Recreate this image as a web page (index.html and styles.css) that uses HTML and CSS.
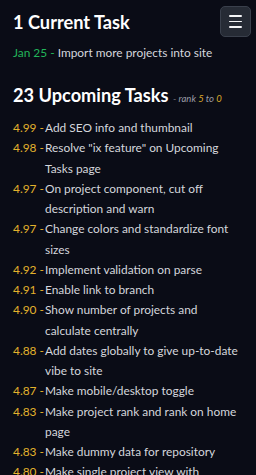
FILE: index.html
```html
<!doctype html>
<html>
	<head>
		<title>Tasks</title>
		<meta charset="utf-8" />
		<link rel="stylesheet" href="styles.css">
	</head>
	<body>
		<div class="page">
			<div class="top">
				<h2>1 Current Task</h2>
				<button class="menu" type="button">
					<span></span><span></span><span></span>
				</button>
			</div>
			<p class="current"><span class="date">Jan 25 -</span> Import more projects into site</p>

			<h2 class="upcoming">23 Upcoming Tasks <small>- rank <b>5</b> to <b>0</b></small></h2>
			<ul class="tasks">
				<li><span class="rank">4.99 -</span><span>Add SEO info and thumbnail</span></li>
				<li><span class="rank">4.98 -</span><span>Resolve "ix feature" on Upcoming Tasks page</span></li>
				<li><span class="rank">4.97 -</span><span>On project component, cut off description and warn</span></li>
				<li><span class="rank">4.97 -</span><span>Change colors and standardize font sizes</span></li>
				<li><span class="rank">4.92 -</span><span>Implement validation on parse</span></li>
				<li><span class="rank">4.91 -</span><span>Enable link to branch</span></li>
				<li><span class="rank">4.90 -</span><span>Show number of projects and calculate centrally</span></li>
				<li><span class="rank">4.88 -</span><span>Add dates globally to give up-to-date vibe to site</span></li>
				<li><span class="rank">4.87 -</span><span>Make mobile/desktop toggle</span></li>
				<li><span class="rank">4.83 -</span><span>Make project rank and rank on home page</span></li>
				<li><span class="rank">4.83 -</span><span>Make dummy data for repository</span></li>
				<li><span class="rank">4.80 -</span><span>Make single project view with description</span></li>
				<li><span class="rank">4.78 -</span><span>Add search to projects page</span></li>
			</ul>
		</div>
	</body>
</html>
```

FILE: styles.css
```css
html,
body {
	margin: 0;
	background: #0a0c16;
}

body {
	font-family: Lato, "Noto Sans", sans-serif;
	color: #d4d6dc;
}

.page {
	padding: 6px 5px 0 13px;
}

.top {
	display: flex;
	justify-content: space-between;
	align-items: flex-start;
}

h2 {
	margin: 0;
	color: #fff;
	font-size: 18.2px;
	font-weight: 700;
	line-height: 24px;
}

.top h2 {
	margin-top: 4px;
}

.menu {
	width: 31px;
	height: 31px;
	padding: 0;
	border: 1px solid #3a404c;
	border-radius: 5px;
	background: #262b35;
	display: flex;
	flex-direction: column;
	justify-content: center;
	align-items: center;
	gap: 3.5px;
}

.menu span {
	display: block;
	width: 13px;
	height: 1.8px;
	background: #f4f5f7;
	border-radius: 1px;
}

.current {
	margin: 6px 0 0;
	font-size: 11.9px;
	line-height: 20px;
}

.date {
	color: #22b55a;
}

.upcoming {
	margin-top: 20px;
}

.upcoming small {
	font-size: 9.5px;
	font-weight: 400;
	font-style: italic;
	color: #9a9ca6;
}

.upcoming b {
	font-weight: 400;
	color: #d9a82a;
}

.tasks {
	list-style: none;
	margin: 7px 0 0;
	padding: 0 9px 0 0;
	font-size: 11.9px;
	line-height: 20.25px;
}

.tasks li {
	display: flex;
}

.rank {
	flex: none;
	width: 32px;
	white-space: nowrap;
	color: #e3b22c;
}
```
